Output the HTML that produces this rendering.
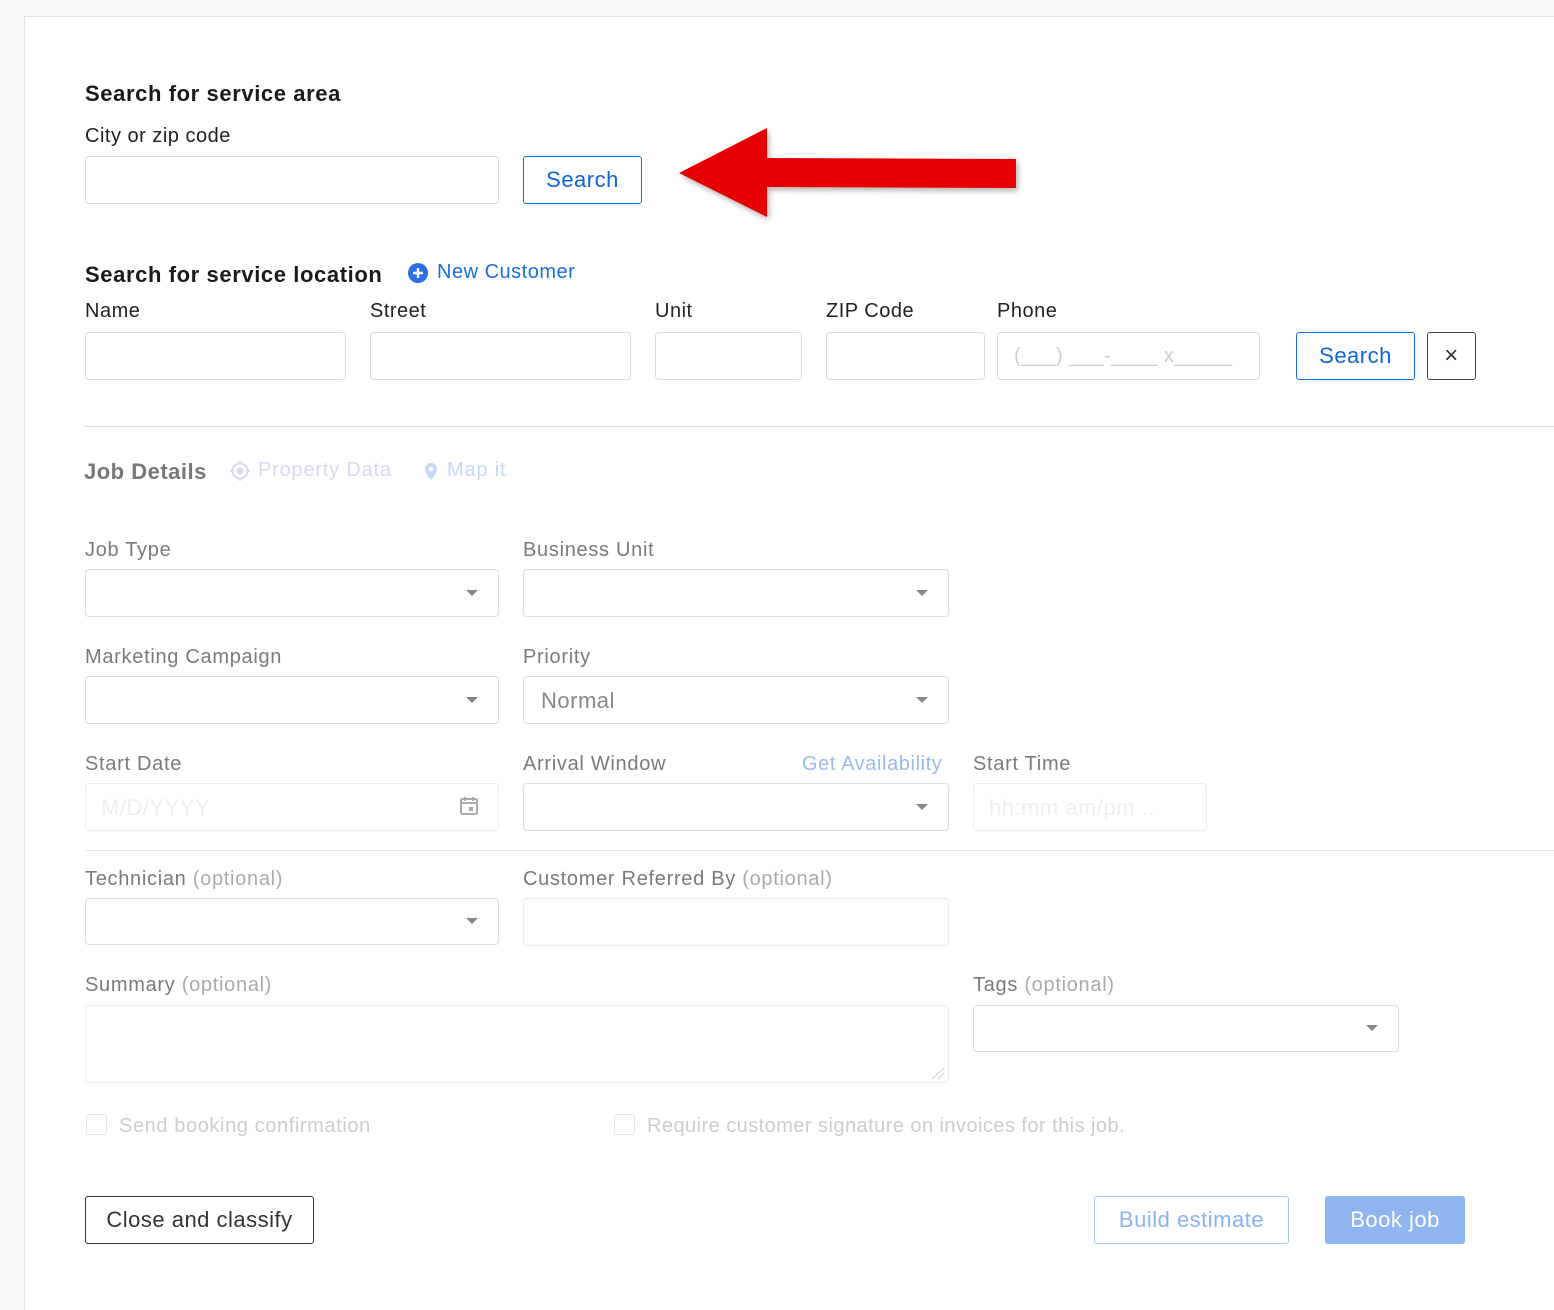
<!DOCTYPE html>
<html style="width:1554px;height:1310px;overflow:hidden"><head><meta charset="utf-8"><style>
*{box-sizing:border-box;margin:0;padding:0}
body{width:1554px;height:1310px;background:#f8f8f8;font-family:"Liberation Sans",sans-serif;position:relative;overflow:hidden;letter-spacing:0.5px}
.panel{position:absolute;left:24px;top:16px;width:1530px;height:1294px;background:#fff;border:1px solid #e2e2e2;border-right:none;border-bottom:none}
.a{position:absolute;white-space:nowrap}
.h{font-size:22px;font-weight:bold;color:#1a1a1a;letter-spacing:0.6px}
.l{font-size:20px;color:#222}
.g{font-size:20px;color:#7a7a7a;letter-spacing:0.7px}
.o{color:#aaa}
.in{position:absolute;border:1px solid #dcdcdc;border-radius:4px;background:#fff}
.in2{position:absolute;border:1px solid #ececec;border-radius:4px;background:#fff}
.car{position:absolute;width:0;height:0;border-left:6px solid transparent;border-right:6px solid transparent;border-top:6px solid #888}
.btn{position:absolute;border-radius:3px;font-size:22px;display:flex;align-items:center;justify-content:center}
</style></head><body>
<div class="panel"></div>

<div class="a h" style="left:85px;top:81px">Search for service area</div>
<div class="a l" style="left:85px;top:125px">City or zip code</div>
<div class="in" style="left:85px;top:156px;width:414px;height:48px"></div>
<div class="btn" style="left:523px;top:156px;width:119px;height:48px;border:1.5px solid #1a6ee0;color:#0d65d9">Search</div>

<svg class="a" style="left:660px;top:115px" width="380" height="120">
<defs><filter id="s" x="-10%" y="-20%" width="130%" height="150%"><feDropShadow dx="2" dy="3" stdDeviation="3" flood-color="#000" flood-opacity="0.3"/></filter></defs>
<polygon filter="url(#s)" fill="#e40606" points="19,58 107,13 107,43 356,44 356,73 107,72 107,102"/>
</svg>

<div class="a h" style="left:85px;top:262px">Search for service location</div>
<svg class="a" style="left:407px;top:262px" width="22" height="22"><circle cx="11" cy="11" r="10" fill="#2b6ee8"/><path d="M11 6v10M6 11h10" stroke="#fff" stroke-width="2.4"/></svg>
<div class="a l" style="left:437px;top:261px;color:#1a6ee0">New Customer</div>

<div class="a l" style="left:85px;top:300px">Name</div>
<div class="a l" style="left:370px;top:300px">Street</div>
<div class="a l" style="left:655px;top:300px">Unit</div>
<div class="a l" style="left:826px;top:300px">ZIP Code</div>
<div class="a l" style="left:997px;top:300px">Phone</div>
<div class="in" style="left:85px;top:332px;width:261px;height:48px"></div>
<div class="in" style="left:370px;top:332px;width:261px;height:48px"></div>
<div class="in" style="left:655px;top:332px;width:147px;height:48px"></div>
<div class="in" style="left:826px;top:332px;width:159px;height:48px"></div>
<div class="in" style="left:997px;top:332px;width:263px;height:48px"></div>
<div class="a" style="left:1014px;top:345px;font-size:20px;color:#ccc">(___) ___-____ x_____</div>
<div class="btn" style="left:1296px;top:332px;width:119px;height:48px;border:1.5px solid #1a6ee0;color:#0d65d9">Search</div>
<div class="btn" style="left:1427px;top:332px;width:49px;height:48px;border:1.5px solid #444;color:#333;font-size:24px">×</div>

<div class="a" style="left:85px;top:426px;width:1469px;height:1px;background:#ddd"></div>

<div class="a" style="left:84px;top:459px;font-size:22px;font-weight:bold;color:#777">Job Details</div>
<svg class="a" style="left:229px;top:460px" width="22" height="22"><circle cx="11" cy="11" r="7.5" fill="none" stroke="#d8d8f4" stroke-width="2"/><circle cx="11" cy="11" r="3.5" fill="#d8d8f4"/><path d="M11 1v3M11 18v3M1 11h3M18 11h3" stroke="#d8d8f4" stroke-width="2"/></svg>
<div class="a" style="left:258px;top:459px;font-size:20px;color:#d8d8f4;letter-spacing:0.8px">Property Data</div>
<svg class="a" style="left:423px;top:462px" width="16" height="20"><path d="M8 1C4.5 1 2 3.6 2 7c0 4.5 6 11 6 11s6-6.5 6-11c0-3.4-2.5-6-6-6z" fill="#c5d8f6"/><circle cx="8" cy="7" r="2.3" fill="#fff"/></svg>
<div class="a" style="left:447px;top:459px;font-size:20px;color:#c5d8f6;letter-spacing:0.8px">Map it</div>

<div class="a g" style="left:85px;top:539px">Job Type</div>
<div class="a g" style="left:523px;top:539px">Business Unit</div>
<div class="in" style="left:85px;top:569px;width:414px;height:48px"></div><div class="car" style="left:466px;top:590px"></div>
<div class="in" style="left:523px;top:569px;width:426px;height:48px"></div><div class="car" style="left:916px;top:590px"></div>

<div class="a g" style="left:85px;top:646px">Marketing Campaign</div>
<div class="a g" style="left:523px;top:646px">Priority</div>
<div class="in" style="left:85px;top:676px;width:414px;height:48px"></div><div class="car" style="left:466px;top:697px"></div>
<div class="in" style="left:523px;top:676px;width:426px;height:48px"></div><div class="car" style="left:916px;top:697px"></div>
<div class="a" style="left:541px;top:688px;font-size:22px;color:#888">Normal</div>

<div class="a g" style="left:85px;top:753px">Start Date</div>
<div class="a g" style="left:523px;top:753px">Arrival Window</div>
<div class="a" style="left:802px;top:753px;font-size:20px;color:#9cb9ef;letter-spacing:0.6px">Get Availability</div>
<div class="a g" style="left:973px;top:753px">Start Time</div>
<div class="in2" style="left:85px;top:783px;width:414px;height:48px"></div>
<div class="a" style="left:101px;top:795px;font-size:22px;color:#eee">M/D/YYYY</div>
<svg class="a" style="left:458px;top:795px" width="22" height="22"><rect x="3" y="4" width="16" height="15" rx="1.5" fill="none" stroke="#aaa" stroke-width="2"/><path d="M3 8h16M7 2v4M15 2v4" stroke="#aaa" stroke-width="2"/><rect x="11" y="12" width="4" height="4" fill="#aaa"/></svg>
<div class="in" style="left:523px;top:783px;width:426px;height:48px"></div><div class="car" style="left:916px;top:804px"></div>
<div class="in2" style="left:973px;top:783px;width:234px;height:48px"></div>
<div class="a" style="left:989px;top:795px;font-size:22px;color:#eee">hh:mm am/pm ..</div>

<div class="a" style="left:85px;top:850px;width:1469px;height:1px;background:#e8e8e8"></div>

<div class="a g" style="left:85px;top:868px">Technician <span class="o">(optional)</span></div>
<div class="a g" style="left:523px;top:868px">Customer Referred By <span class="o">(optional)</span></div>
<div class="in" style="left:85px;top:898px;width:414px;height:47px"></div><div class="car" style="left:466px;top:918px"></div>
<div class="in2" style="left:523px;top:898px;width:426px;height:48px"></div>

<div class="a g" style="left:85px;top:974px">Summary <span class="o">(optional)</span></div>
<div class="a g" style="left:973px;top:974px">Tags <span class="o">(optional)</span></div>
<div class="in2" style="left:85px;top:1005px;width:864px;height:78px"></div>
<svg class="a" style="left:930px;top:1066px" width="16" height="14"><path d="M2 13L14 2M8 13L14 7" stroke="#ccc" stroke-width="1"/></svg>
<div class="in" style="left:973px;top:1005px;width:426px;height:47px"></div><div class="car" style="left:1366px;top:1025px"></div>

<div class="a" style="left:86px;top:1114px;width:21px;height:21px;border:1px solid #e4e4e4;border-radius:3px"></div>
<div class="a" style="left:119px;top:1115px;font-size:20px;color:#ccc;letter-spacing:0.6px">Send booking confirmation</div>
<div class="a" style="left:614px;top:1114px;width:21px;height:21px;border:1px solid #e4e4e4;border-radius:3px"></div>
<div class="a" style="left:647px;top:1115px;font-size:20px;color:#ccc;letter-spacing:0.45px">Require customer signature on invoices for this job.</div>

<div class="btn" style="left:85px;top:1196px;width:229px;height:48px;border:1.5px solid #333;color:#333">Close and classify</div>
<div class="btn" style="left:1094px;top:1196px;width:195px;height:48px;border:1.5px solid #a9c6f5;color:#8cb2f0">Build estimate</div>
<div class="btn" style="left:1325px;top:1196px;width:140px;height:48px;background:#8fb4ef;color:#fff">Book job</div>
</body></html>
